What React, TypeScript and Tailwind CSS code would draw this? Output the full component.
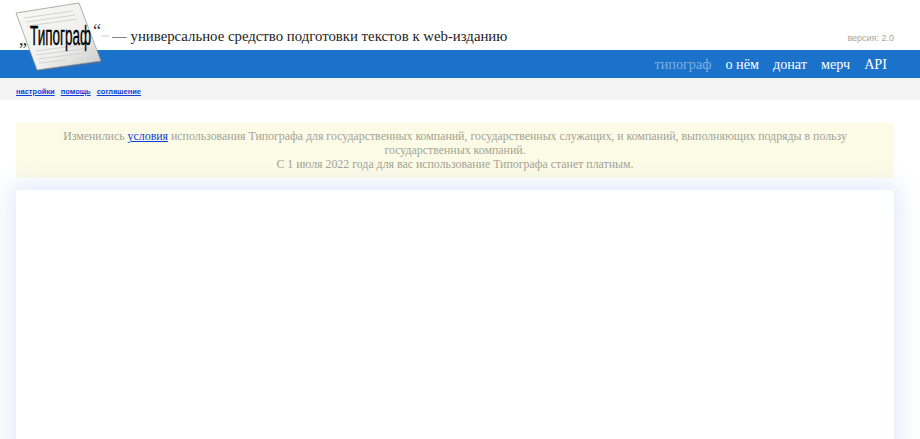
const serif = { fontFamily: '"Liberation Serif", serif' };
const sans = { fontFamily: '"Liberation Sans", sans-serif' };

function Logo() {
  return (
    <div className="absolute left-0 top-0 h-[74px] w-[112px]">
      <svg width="112" height="74" viewBox="0 0 112 74" className="absolute left-0 top-0">
        <defs>
          <linearGradient id="sheet" x1="0" y1="0" x2="1" y2="1">
            <stop offset="0" stopColor="#f8f8f6" />
            <stop offset="0.6" stopColor="#f0f0ee" />
            <stop offset="1" stopColor="#c9c9c9" />
          </linearGradient>
        </defs>
        <polygon points="38,71 103,63 101,58 37,68" fill="#5b6b80" opacity="0.55" />
        <polygon points="37,70 101,61 79,3 16,13" fill="url(#sheet)" stroke="#8f8f8f" strokeWidth="0.7" />
        <g stroke="#d4d4d2" strokeWidth="1">
          <line x1="24" y1="18" x2="73" y2="11" />
          <line x1="26" y1="22" x2="75" y2="15" />
          <line x1="28" y1="26" x2="77" y2="19" />
          <line x1="35" y1="51" x2="88" y2="44" />
          <line x1="36" y1="55" x2="90" y2="48" />
          <line x1="38" y1="59" x2="84" y2="53" />
          <line x1="39" y1="63" x2="66" y2="60" />
        </g>
        <path d="M101 37 q2 -2 4 -1 t4 -1" fill="none" stroke="#dedede" strokeWidth="1.4" />
      </svg>
      <span className="absolute left-[19px] top-[29px] text-[18px] leading-[20px] text-[#222]" style={serif}>„</span>
      <span
        className="absolute left-[30px] top-[21px] origin-left scale-x-[0.5] whitespace-nowrap text-[27px] leading-[31px] text-black [-webkit-text-stroke:0.4px_black]"
        style={sans}
      >
        Типограф
      </span>
      <span className="absolute left-[93px] top-[21px] text-[18px] leading-[20px] text-[#333]" style={serif}>“</span>
    </div>
  );
}

export default function App() {
  return (
    <div className="relative h-[439px] overflow-hidden bg-white" style={serif}>
      <Logo />

      {/* Header */}
      <div className="flex h-[50px] items-end justify-between pb-[3px] pl-[112px] pr-[26px]">
        <div className="text-[14.8px] leading-[22px] text-[#222]">— универсальное средство подготовки текстов к web-изданию</div>
        <div className="pb-[2px] text-[9px] leading-[14px] text-[#aaa69a]" style={sans}>версия: 2.0</div>
      </div>

      {/* Menu */}
      <nav className="flex h-[28px] items-center justify-end gap-[14px] bg-[#1b72cb] pr-[33px] pt-[1px] text-[14.2px] text-white">
        <span className="text-[#7fb0de]">типограф</span>
        <span>о нём</span>
        <span>донат</span>
        <span>мерч</span>
        <span>API</span>
      </nav>

      {/* Sub menu */}
      <div className="flex h-[22px] items-center gap-[6px] bg-[#f3f3f3] pl-4 pt-[5px] text-[7.5px] font-bold" style={sans}>
        <a href="#" className="text-[#0b3fd6] underline">настройки</a>
        <a href="#" className="text-[#0b3fd6] underline">помощь</a>
        <a href="#" className="text-[#0b3fd6] underline">соглашение</a>
      </div>

      <div className="pl-4 pr-[26px] pt-[23px]">
        {/* Notice */}
        <div className="bg-[#fcfbe6] px-6 pb-[7px] pt-[6px] text-center text-[11.87px] leading-[14px] text-[#a3a396]">
          <p>
            Изменились <a href="#" className="text-[#0b3fd6] underline">условия</a> использования Типографа для государственных компаний, государственных служащих, и компаний, выполняющих подряды в пользу государственных компаний.
          </p>
          <p>С 1 июля 2022 года для вас использование Типографа станет платным.</p>
        </div>

        {/* Editor card */}
        <div className="mt-3 h-[400px] rounded-[3px] bg-white shadow-[0_0_22px_6px_rgba(190,210,245,0.45)]" />
      </div>
    </div>
  );
}
